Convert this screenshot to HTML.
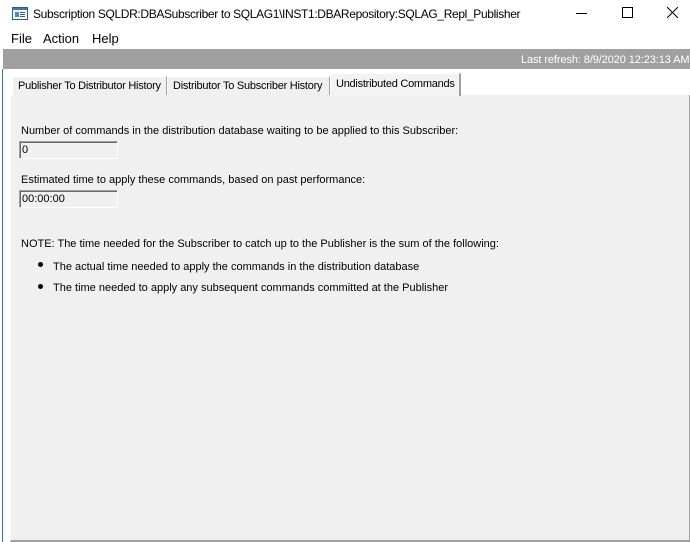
<!DOCTYPE html>
<html><head><style>
*{margin:0;padding:0;box-sizing:border-box}
body{width:690px;height:542px;background:#fff;font-family:"Liberation Sans",Arial,sans-serif;font-size:11px;color:#000;position:relative;overflow:hidden}
.a{position:absolute;white-space:nowrap}
.tab{position:absolute;top:76px;height:19px;background:#f0f0f0;border-left:1px solid #fff;border-right:1px solid #a0a0a0;border-top:1px solid #fff;font-size:11px;line-height:19px;padding-left:5px;letter-spacing:-0.25px;white-space:nowrap;overflow:hidden}
.box{position:absolute;left:19px;width:99px;height:18px;background:#f0f0f0;border:1px solid #a0a0a0;border-right-color:#fff;border-bottom-color:#fff;box-shadow:inset 1px 1px 0 #696969;line-height:17px;padding-left:2px;font-size:11px}
.dot{position:absolute;left:38px;width:5px;height:5px;border-radius:50%;background:#000}
</style></head><body>
<svg class="a" style="left:12px;top:7px" width="16" height="13" viewBox="0 0 16 13"><rect x="0.5" y="0.5" width="15" height="12" fill="#fff" stroke="#1f5fa8"/><rect x="1" y="1" width="14" height="2" fill="#3a78c4"/><rect x="3" y="5" width="4" height="5" fill="#4a86cf"/><rect x="8" y="5" width="5" height="1" fill="#555"/><rect x="8" y="7" width="5" height="1" fill="#555"/><rect x="8" y="9" width="5" height="1" fill="#555"/></svg>
<div class="a" style="left:33px;top:7px;font-size:12px;letter-spacing:-0.35px">Subscription SQLDR:DBASubscriber to SQLAG1\INST1:DBARepository:SQLAG_Repl_Publisher</div>
<div class="a" style="left:576px;top:13px;width:11px;height:1px;background:#000"></div>
<div class="a" style="left:622px;top:7px;width:11px;height:11px;border:1px solid #000"></div>
<svg class="a" style="left:667px;top:7px" width="11" height="11"><path d="M0 0L11 11M11 0L0 11" stroke="#000" stroke-width="1"/></svg>
<div class="a" style="left:11px;top:31px;font-size:13px">File</div>
<div class="a" style="left:43px;top:31px;font-size:13px">Action</div>
<div class="a" style="left:92px;top:31px;font-size:13px">Help</div>
<div class="a" style="left:3px;top:49px;width:687px;height:20px;background:#a0a0a0"></div>
<div class="a" style="left:521px;top:54px;color:#fff;font-size:11px;letter-spacing:-0.1px">Last refresh: 8/9/2020 12:23:13 AM</div>
<div class="a" style="left:2px;top:69px;width:1px;height:473px;background:#2b79c2"></div>
<div class="a" style="left:10px;top:95px;width:680px;height:447px;background:#f0f0f0;border-right:1px solid #a0a0a0;border-bottom:2px solid #a0a0a0;border-left:1px solid #fff"></div>
<div class="tab" style="left:12px;width:155px">Publisher To Distributor History</div>
<div class="tab" style="left:167px;width:163px">Distributor To Subscriber History</div>
<div class="tab" style="left:330px;top:73px;height:23px;width:131px;border-right:2px solid #a0a0a0;background:#f3f3f3;line-height:20px">Undistributed Commands</div>
<div class="a" style="left:21px;top:125px">Number of commands in the distribution database waiting to be applied to this Subscriber:</div>
<div class="box" style="top:141px">0</div>
<div class="a" style="left:21px;top:174px">Estimated time to apply these commands, based on past performance:</div>
<div class="box" style="top:190px">00:00:00</div>
<div class="a" style="left:21px;top:238px">NOTE: The time needed for the Subscriber to catch up to the Publisher is the sum of the following:</div>
<div class="dot" style="top:262px"></div>
<div class="a" style="left:53px;top:261px">The actual time needed to apply the commands in the distribution database</div>
<div class="dot" style="top:284px"></div>
<div class="a" style="left:53px;top:282px">The time needed to apply any subsequent commands committed at the Publisher</div>
</body></html>
